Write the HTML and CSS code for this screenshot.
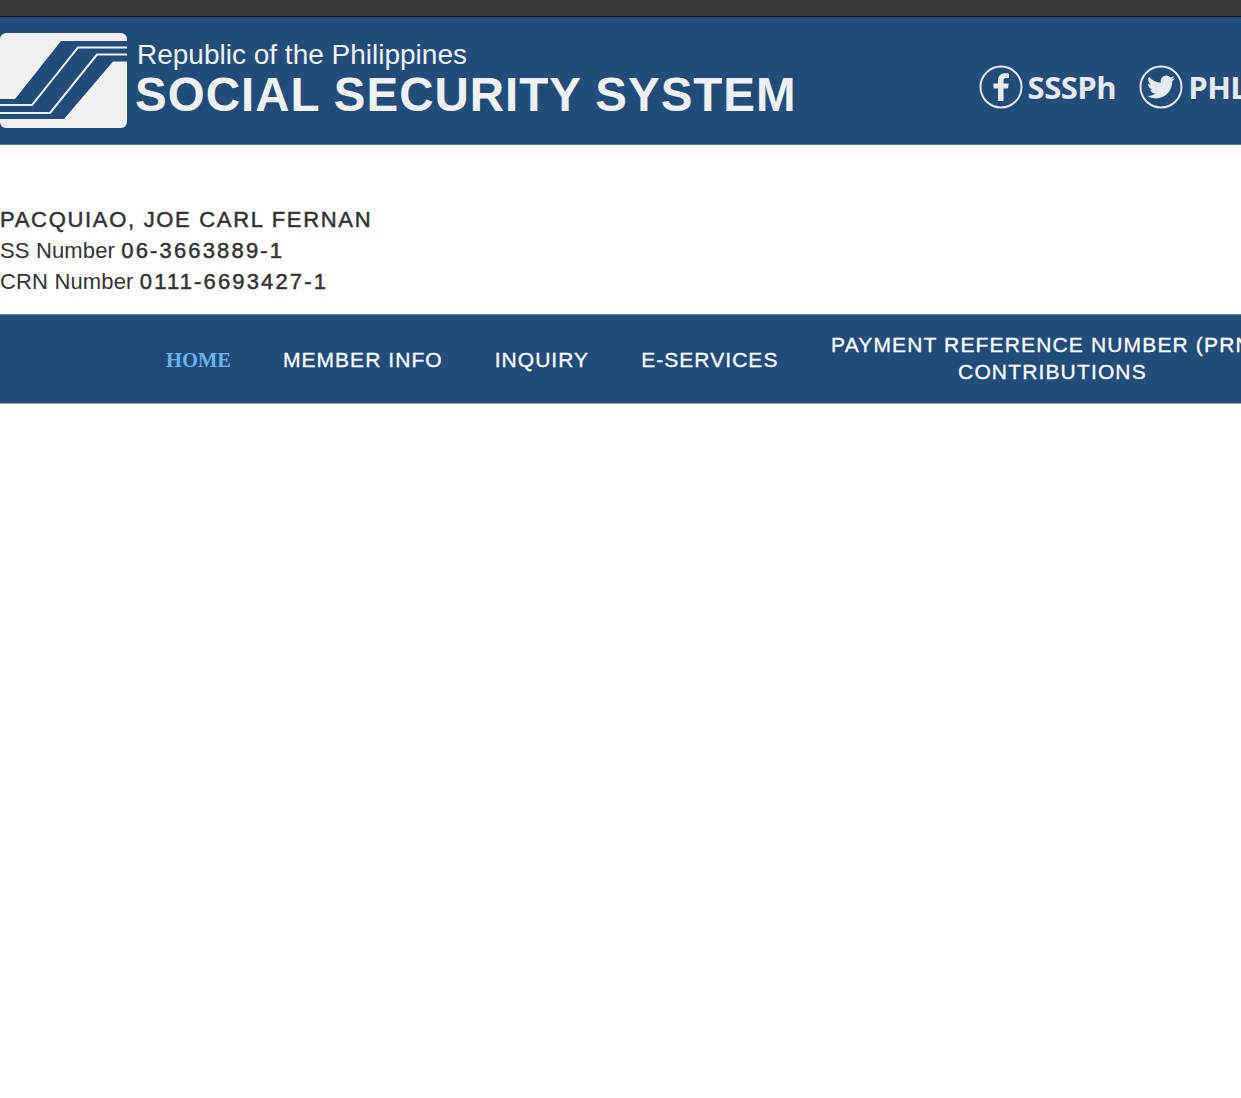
FILE: index.html
```html
<!DOCTYPE html>
<html lang="en">
<head>
    <meta charset="UTF-8">
    <title>Social Security System</title>
    <link rel="stylesheet" href="styles.css">
</head>
<body>
    <div class="topbar"></div>

    <header class="banner">
        <svg class="logo" viewBox="0 0 127 95" aria-hidden="true">
            <rect x="0" y="0" width="127" height="95" rx="6" fill="#f1f1f3"/>
            <path d="M61 8H127V28.500H113L64 86H0V66H15Z" fill="#224d7a"/>
            <path d="M127 14.500H78L32 72H0M127 21.500H97L50 80H0" fill="none" stroke="#f1f1f3" stroke-width="2"/>
        </svg>
        <div class="brand">
            <div class="brand-top">Republic of the Philippines</div>
            <div class="brand-name">SOCIAL SECURITY SYSTEM</div>
        </div>
        <div class="social">
            <svg class="social-icon" viewBox="0 0 44 44" aria-hidden="true">
                <circle cx="22" cy="22" r="20.500" fill="none" stroke="#e6e9ee" stroke-width="2"/>
                <path d="M24.500 36V23.500H29L29.700 18.500H24.500V15.500C24.500 14 25 13 27 13H30V8.500C29 8.400 27.800 8.300 26.300 8.300C22 8.300 19 10.800 19 15V18.500H14.500V23.500H19V36Z" fill="#e6e9ee"/>
            </svg>
            <span class="social-name">SSSPh</span>
            <svg class="social-icon social-twitter" viewBox="0 0 44 44" aria-hidden="true">
                <circle cx="22" cy="22" r="20.500" fill="none" stroke="#e6e9ee" stroke-width="2"/>
                <g transform="translate(8 8) scale(1.17)">
                    <path d="M23.950 4.570a10 10 0 0 1-2.820.770 4.960 4.960 0 0 0 2.160-2.720c-.950.550-2 .950-3.130 1.180a4.920 4.920 0 0 0-8.380 4.480C7.690 8.090 4.070 6.130 1.640 3.160a4.820 4.820 0 0 0-.660 2.470c0 1.710.870 3.210 2.190 4.100a4.900 4.900 0 0 1-2.230-.620v.060a4.920 4.920 0 0 0 3.950 4.830 5 5 0 0 1-2.210.080 4.940 4.940 0 0 0 4.600 3.420A9.870 9.870 0 0 1 0 19.540a14 14 0 0 0 7.560 2.210c9.050 0 14-7.500 14-13.980 0-.210 0-.420-.020-.630a9.940 9.940 0 0 0 2.460-2.550z" fill="#e6e9ee"/>
                </g>
            </svg>
            <span class="social-name">PHLSSS</span>
        </div>
    </header>

    <section class="member">
        <div class="member-name">PACQUIAO, JOE CARL FERNAN</div>
        <div>SS Number <b>06-3663889-1</b></div>
        <div>CRN Number <b>0111-6693427-1</b></div>
    </section>

    <nav class="menu">
        <a class="menu-item active">HOME</a>
        <a class="menu-item">MEMBER INFO</a>
        <a class="menu-item">INQUIRY</a>
        <a class="menu-item">E-SERVICES</a>
        <a class="menu-item menu-wide">PAYMENT REFERENCE NUMBER (PRN) /<br>CONTRIBUTIONS</a>
    </nav>
</body>
</html>
```

FILE: styles.css
```css
html, body {
    margin: 0;
    padding: 0;
    height: 1098px;
    overflow: hidden;
    background: white;
}

body {
    font-family: "Liberation Sans", Arial, sans-serif;
    color: #333;
}

.topbar {
    height: 16px;
    background: #36373b;
    border-bottom: 1px solid #10141c;
}

.banner {
    display: flex;
    align-items: flex-start;
    height: 128px;
    background: #224d7a;
    border-bottom: 1px solid #5f7f9f;
    box-sizing: border-box;
    padding-top: 16px;
    overflow: hidden;
}

.logo {
    flex: none;
    width: 127px;
    height: 95px;
}

.brand {
    flex: none;
    margin-left: 8px;
    color: #f1f1f3;
}

.brand-top {
    margin: 7px 0 0 2px;
    font-size: 28px;
    line-height: 30px;
}

.brand-name {
    font-size: 47.500px;
    line-height: 49px;
    font-weight: bold;
    letter-spacing: 1px;
    white-space: nowrap;
}

.social {
    flex: none;
    display: flex;
    align-items: center;
    margin: 32px 0 0 182px;
    color: #e6e9ee;
}

.social-icon {
    flex: none;
    width: 44px;
    height: 44px;
}

.social-twitter {
    margin-left: 23px;
}

.social-name {
    margin-left: 5px;
    font-family: "Open Sans", sans-serif;
    font-size: 31px;
    font-weight: bold;
    letter-spacing: -.5px;
    white-space: nowrap;
}

.member {
    padding: 59px 0 17px;
    font-size: 22px;
    line-height: 31px;
    letter-spacing: .15px;
}

.member b {
    font-weight: normal;
    letter-spacing: 2.150px;
    -webkit-text-stroke: .5px #333;
}

.member-name {
    letter-spacing: 1.690px;
    -webkit-text-stroke: .5px #333;
}

.menu {
    display: flex;
    align-items: center;
    gap: 52px;
    height: 90px;
    box-sizing: border-box;
    padding-left: 166px;
    background: #224d7a;
    border-top: 1px solid #5f7f9f;
    border-bottom: 1px solid #8fa8c2;
    overflow: hidden;
}

.menu-item {
    flex: none;
    color: white;
    font-size: 21px;
    line-height: 27px;
    letter-spacing: 1.050px;
    text-align: center;
    white-space: nowrap;
    -webkit-text-stroke: .3px white;
}

.menu-item.active {
    color: #6db3ee;
    font-family: "Liberation Serif", serif;
    font-size: 20.500px;
    font-weight: bold;
    letter-spacing: 0;
    padding-top: 3px;
    -webkit-text-stroke: 0;
}

.menu-wide {
    width: 444px;
    margin-bottom: 2px;
    letter-spacing: 1.150px;
}
```
